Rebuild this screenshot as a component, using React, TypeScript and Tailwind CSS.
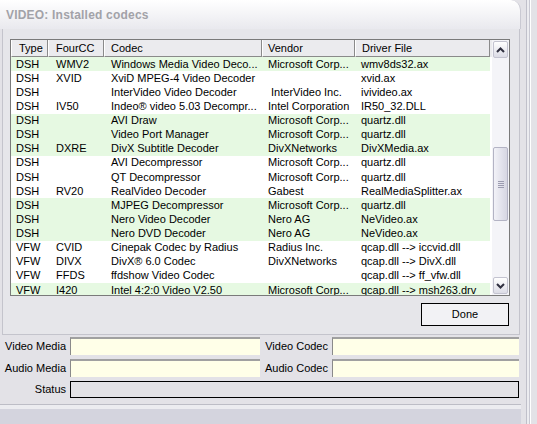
import React from 'react';

interface Row {
  type: string;
  fourcc: string;
  codec: string;
  vendor: string;
  file: string;
  green?: boolean;
}

const rows: Row[] = [
  { type: 'DSH', fourcc: 'WMV2', codec: 'Windows Media Video Deco...', vendor: 'Microsoft Corp...', file: 'wmv8ds32.ax', green: true },
  { type: 'DSH', fourcc: 'XVID', codec: 'XviD MPEG-4 Video Decoder', vendor: '', file: 'xvid.ax' },
  { type: 'DSH', fourcc: '', codec: 'InterVideo Video Decoder', vendor: ' InterVideo Inc.', file: 'ivivideo.ax' },
  { type: 'DSH', fourcc: 'IV50', codec: 'Indeo® video 5.03 Decompr...', vendor: 'Intel Corporation', file: 'IR50_32.DLL' },
  { type: 'DSH', fourcc: '', codec: 'AVI Draw', vendor: 'Microsoft Corp...', file: 'quartz.dll', green: true },
  { type: 'DSH', fourcc: '', codec: 'Video Port Manager', vendor: 'Microsoft Corp...', file: 'quartz.dll', green: true },
  { type: 'DSH', fourcc: 'DXRE', codec: 'DivX Subtitle Decoder', vendor: 'DivXNetworks', file: 'DivXMedia.ax', green: true },
  { type: 'DSH', fourcc: '', codec: 'AVI Decompressor', vendor: 'Microsoft Corp...', file: 'quartz.dll' },
  { type: 'DSH', fourcc: '', codec: 'QT Decompressor', vendor: 'Microsoft Corp...', file: 'quartz.dll' },
  { type: 'DSH', fourcc: 'RV20', codec: 'RealVideo Decoder', vendor: 'Gabest', file: 'RealMediaSplitter.ax' },
  { type: 'DSH', fourcc: '', codec: 'MJPEG Decompressor', vendor: 'Microsoft Corp...', file: 'quartz.dll', green: true },
  { type: 'DSH', fourcc: '', codec: 'Nero Video Decoder', vendor: 'Nero AG', file: 'NeVideo.ax', green: true },
  { type: 'DSH', fourcc: '', codec: 'Nero DVD Decoder', vendor: 'Nero AG', file: 'NeVideo.ax', green: true },
  { type: 'VFW', fourcc: 'CVID', codec: 'Cinepak Codec by Radius', vendor: 'Radius Inc.', file: 'qcap.dll --> iccvid.dll' },
  { type: 'VFW', fourcc: 'DIVX', codec: 'DivX® 6.0 Codec', vendor: 'DivXNetworks', file: 'qcap.dll --> DivX.dll' },
  { type: 'VFW', fourcc: 'FFDS', codec: 'ffdshow Video Codec', vendor: '', file: 'qcap.dll --> ff_vfw.dll' },
  { type: 'VFW', fourcc: 'I420', codec: 'Intel 4:2:0 Video V2.50', vendor: 'Microsoft Corp...', file: 'qcap.dll --> msh263.drv', green: true },
];

const headerCell = 'h-full flex items-center border-r border-b border-r-[#8a8a8a] border-b-[#8a8a8a] border-l border-l-white';

function Field({ label, labelW, status }: { label: string; labelW: string; status?: boolean }) {
  return (
    <div className="flex items-center">
      <span className={`${labelW} text-right pr-[4px] whitespace-nowrap`}>{label}</span>
      {status ? (
        <div className="flex-1 h-[17px] border border-black bg-[#e3e2e6]" />
      ) : (
        <div className="flex-1 h-[18px] bg-[#ffffe8] border-l border-t-2 border-l-[#8a8a8a] border-t-[#a0a0a0]" />
      )}
    </div>
  );
}

export default function App() {
  return (
    <div
      className="w-[537px] h-[424px] bg-[#e3e2e7] flex overflow-hidden text-[11px] text-black"
      style={{ fontFamily: '"Liberation Sans", Arial, sans-serif' }}
    >
      <div className="w-[521px] flex flex-col">
        {/* title */}
        <div className="h-[29px] bg-gradient-to-b from-white to-[#e9e9ee] rounded-tr-[10px] border-r border-[#c9c9d2] flex items-center pl-[6px]">
          <span className="text-[12px] font-bold text-[#a2a2a8] tracking-[0.2px]">VIDEO: Installed codecs</span>
        </div>

        {/* group */}
        <div className="h-[306px] bg-[#e6e6ea] border-l border-r border-b border-[#c4c4cc] ml-[2px] mr-[1px] pt-[10px] pl-[7px] flex flex-col">
          <div className="w-[500px] h-[257px] border border-[#7a7a7a] bg-white flex">
            <div className="flex-1 flex flex-col overflow-hidden">
              <div className="h-[17px] flex shrink-0 bg-[#ebebee]">
                <div className={`${headerCell} w-[37px] pl-[7px]`}>Type</div>
                <div className={`${headerCell} w-[56px] pl-[7px]`}>FourCC</div>
                <div className={`${headerCell} w-[158px] pl-[6px]`}>Codec</div>
                <div className={`${headerCell} w-[93px] pl-[5px]`}>Vendor</div>
                <div className={`${headerCell} w-[135px] pl-[6px]`}>Driver File</div>
                <div className="flex-1 h-full bg-[#ebebee]" />
              </div>
              {rows.map((r, i) => (
                <div key={i} className="h-[14.125px] shrink-0 flex items-center leading-none">
                  <div className={`w-[479px] h-full flex items-center ${r.green ? 'bg-[#e6f9e2]' : ''}`}>
                    <span className="w-[37px] pl-[5px] whitespace-nowrap">{r.type}</span>
                    <span className="w-[56px] pl-[8px] whitespace-nowrap">{r.fourcc}</span>
                    <span className="w-[158px] pl-[7px] whitespace-nowrap overflow-hidden">{r.codec}</span>
                    <span className="w-[93px] pl-[6px] whitespace-pre overflow-hidden">{r.vendor}</span>
                    <span className="w-[135px] pl-[6px] whitespace-nowrap overflow-hidden">{r.file}</span>
                  </div>
                </div>
              ))}
            </div>
            {/* scrollbar */}
            <div className="w-[17px] bg-[#f4f4f8] flex flex-col">
              <div className="h-[17px] m-[1px] rounded-[2px] border border-[#c3c3d0] bg-gradient-to-b from-white to-[#dcdce6] flex items-center justify-center">
                <svg width="9" height="6" viewBox="0 0 9 6"><path d="M1 5 L4.5 1.5 L8 5" fill="none" stroke="#303040" strokeWidth="2" /></svg>
              </div>
              <div className="h-[88px]" />
              <div className="h-[74px] mx-[1px] rounded-[2px] border border-[#b3b3c4] bg-gradient-to-r from-[#f2f2f8] to-[#d6d6e2] flex items-center justify-center">
                <div className="flex flex-col gap-[1px]">
                  <div className="w-[6px] h-px bg-[#9c9cb0]" />
                  <div className="w-[6px] h-px bg-[#9c9cb0]" />
                  <div className="w-[6px] h-px bg-[#9c9cb0]" />
                  <div className="w-[6px] h-px bg-[#9c9cb0]" />
                </div>
              </div>
              <div className="flex-1" />
              <div className="h-[17px] m-[1px] rounded-[2px] border border-[#c3c3d0] bg-gradient-to-b from-white to-[#dcdce6] flex items-center justify-center">
                <svg width="9" height="6" viewBox="0 0 9 6"><path d="M1 1 L4.5 4.5 L8 1" fill="none" stroke="#303040" strokeWidth="2" /></svg>
              </div>
            </div>
          </div>
          <div className="flex justify-end pr-[10px] mt-[7px]">
            <button className="w-[88px] h-[23px] border border-black bg-[#f2f2f5] text-[11px] flex items-center justify-center">
              Done
            </button>
          </div>
        </div>

        {/* fields */}
        <div className="flex flex-col gap-[4px] pt-[2px] pr-[2px]">
          <div className="flex">
            <div className="w-[260px]"><Field label="Video Media" labelW="w-[70px]" /></div>
            <div className="flex-1"><Field label="Video Codec" labelW="w-[72px]" /></div>
          </div>
          <div className="flex">
            <div className="w-[260px]"><Field label="Audio Media" labelW="w-[70px]" /></div>
            <div className="flex-1"><Field label="Audio Codec" labelW="w-[72px]" /></div>
          </div>
          <Field label="Status" labelW="w-[70px]" status />
        </div>
        <div className="mt-[6px] h-[5px] border-t border-[#bdbdc6] bg-[#ececf0]" />
        <div className="flex-1 bg-[#d4d4de]" />
      </div>

      {/* right edge */}
      <div className="flex-1 flex">
        <div className="w-[6px] border-r border-[#c0c0ca]" />
        <div className="w-[3px] border-r border-[#c8c8d2] bg-[#ececf0]" />
        <div className="flex-1 border-l border-white" />
      </div>
    </div>
  );
}
